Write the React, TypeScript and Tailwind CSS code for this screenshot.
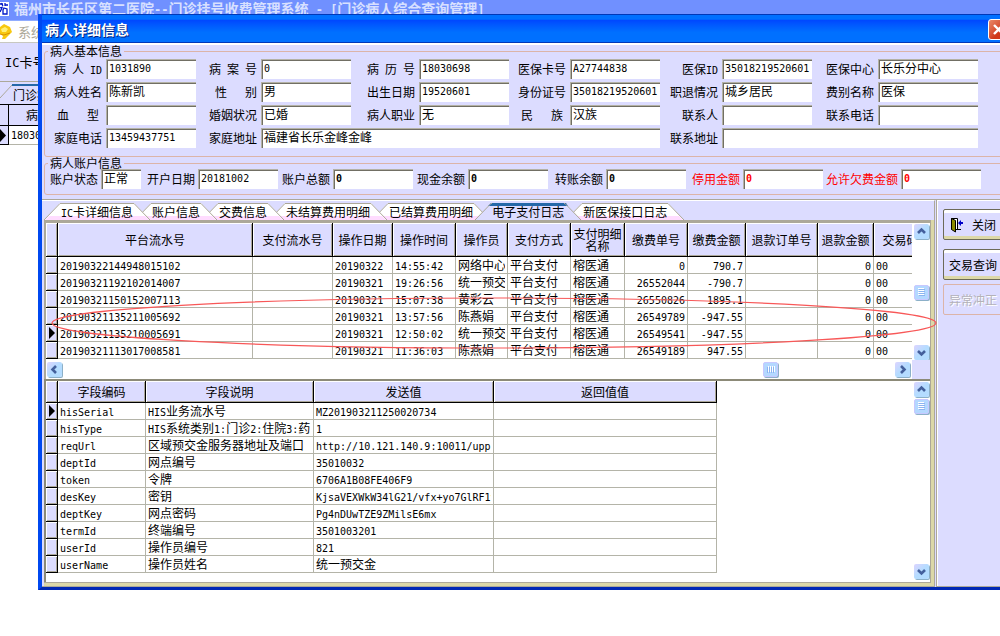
import React from 'react';

interface FieldProps {
  id: string;
  label: string;
  value?: string;
  wide?: string;
  align?: string;
}

interface AccountField {
  id: string;
  label: string;
  value: string;
  labelWidth: string;
  inputWidth: string;
  tone: string;
}

interface Column {
  title: string;
  width: number;
  align?: 'right';
}

const basicFields: FieldProps[] = [
  { id: 'patientId', label: '病 人 ID', value: '1031890' },
  { id: 'caseNo', label: '病 案 号', value: '0' },
  { id: 'recordNo', label: '病 历 号', value: '18030698' },
  { id: 'insuranceCard', label: '医保卡号', value: 'A27744838' },
  { id: 'insuranceId', label: '医保ID', value: '35018219520601' },
  { id: 'insuranceCenter', label: '医保中心', value: '长乐分中心' },
  { id: 'name', label: '病人姓名', value: '陈新凯' },
  { id: 'sex', label: '性   别', value: '男' },
  { id: 'birthday', label: '出生日期', value: '19520601' },
  { id: 'idCard', label: '身份证号', value: '35018219520601' },
  { id: 'retire', label: '职退情况', value: '城乡居民' },
  { id: 'feeType', label: '费别名称', value: '医保' },
  { id: 'blood', label: '血   型', align: 'pr-[7px]' },
  { id: 'marriage', label: '婚姻状况', value: '已婚' },
  { id: 'job', label: '病人职业', value: '无' },
  { id: 'nation', label: '民   族', value: '汉族', align: 'pr-[7px]' },
  { id: 'contact', label: '联系人' },
  { id: 'contactPhone', label: '联系电话' },
  { id: 'homePhone', label: '家庭电话', value: '13459437751' },
  { id: 'homeAddress', label: '家庭地址', value: '福建省长乐金峰金峰', wide: 'col-span-5' },
  { id: 'contactAddress', label: '联系地址', wide: 'col-span-3' },
];

const accountFields: AccountField[] = [
  { id: 'accState', label: '账户状态', value: '正常', labelWidth: 'w-[57px]', inputWidth: 'w-10', tone: 'text-black' },
  { id: 'accOpen', label: '开户日期', value: '20181002', labelWidth: 'w-[57px]', inputWidth: 'w-20', tone: 'text-black' },
  { id: 'accTotal', label: '账户总额', value: '0', labelWidth: 'w-[55px]', inputWidth: 'w-20', tone: 'text-black font-bold' },
  { id: 'accCash', label: '现金余额', value: '0', labelWidth: 'w-[55px]', inputWidth: 'w-20', tone: 'text-black font-bold' },
  { id: 'accTransfer', label: '转账余额', value: '0', labelWidth: 'w-[58px]', inputWidth: 'w-20', tone: 'text-black font-bold' },
  { id: 'accStop', label: '停用金额', value: '0', labelWidth: 'w-[57px]', inputWidth: 'w-20', tone: 'text-[#ff0000] font-bold' },
  { id: 'accDebt', label: '允许欠费金额', value: '0', labelWidth: 'w-[78px]', inputWidth: 'w-20', tone: 'text-[#ff0000] font-bold' },
];

const tabs = ['IC卡详细信息', '账户信息', '交费信息', '未结算费用明细', '已结算费用明细', '电子支付日志', '新医保接口日志'];

const payColumns: Column[] = [
  { title: '平台流水号', width: 195 },
  { title: '支付流水号', width: 80 },
  { title: '操作日期', width: 60 },
  { title: '操作时间', width: 63 },
  { title: '操作员', width: 52 },
  { title: '支付方式', width: 63 },
  { title: '支付明细名称', width: 54 },
  { title: '缴费单号', width: 63, align: 'right' },
  { title: '缴费金额', width: 58, align: 'right' },
  { title: '退款订单号', width: 72 },
  { title: '退款金额', width: 56, align: 'right' },
  { title: '交易码', width: 54 },
];

const payRows = [
  ['20190322144948015102', '', '20190322', '14:55:42', '网络中心', '平台支付', '榕医通', '0', '790.7', '', '0', '00'],
  ['20190321192102014007', '', '20190321', '19:26:56', '统一预交', '平台支付', '榕医通', '26552044', '-790.7', '', '0', '00'],
  ['20190321150152007113', '', '20190321', '15:07:38', '黄彩云', '平台支付', '榕医通', '26550826', '1895.1', '', '0', '00'],
  ['20190321135211005692', '', '20190321', '13:57:56', '陈燕娟', '平台支付', '榕医通', '26549789', '-947.55', '', '0', '00'],
  ['20190321135210005691', '', '20190321', '12:50:02', '统一预交', '平台支付', '榕医通', '26549541', '-947.55', '', '0', '00'],
  ['20190321113017008581', '', '20190321', '11:36:03', '陈燕娟', '平台支付', '榕医通', '26549189', '947.55', '', '0', '00'],
];

const logColumns: Column[] = [
  { title: '字段编码', width: 88 },
  { title: '字段说明', width: 168 },
  { title: '发送值', width: 180 },
  { title: '返回值值', width: 223 },
];

const logRows = [
  ['hisSerial', 'HIS业务流水号', 'MZ201903211250020734', ''],
  ['hisType', 'HIS系统类别1:门诊2:住院3:药,', '1', ''],
  ['reqUrl', '区域预交金服务器地址及端口', 'http://10.121.140.9:10011/upp:', ''],
  ['deptId', '网点编号', '35010032', ''],
  ['token', '令牌', '6706A1B08FE406F9', ''],
  ['desKey', '密钥', 'KjsaVEXWkW34lG21/vfx+yo7GlRF1y', ''],
  ['deptKey', '网点密码', 'Pg4nDUwTZE9ZMilsE6mx', ''],
  ['termId', '终端编号', '3501003201', ''],
  ['userId', '操作员编号', '821', ''],
  ['userName', '操作员姓名', '统一预交金', ''],
];

const isLatin = (text: string) => /^[\x20-\x7e]*$/.test(text);

// Latin runs are half as wide as a Chinese character, so they get their own font
const Mixed = ({ text, latin = 'text-[10px]' }: { text: string; latin?: string }) => (
  <>
    {text.split(/([\x20-\x7e]+)/).map((part, i) =>
      part && isLatin(part) ? (
        <span key={i} className={`whitespace-pre font-['DejaVu_Sans_Mono',monospace] ${latin}`}>{part}</span>
      ) : (
        part
      )
    )}
  </>
);

const TextBox = ({ id, value = '', className }: { id: string; value?: string; className: string }) => (
  <input
    id={id}
    type="text"
    defaultValue={value}
    className={`h-5 min-w-0 rounded-none border-l border-t border-[#b4b2a5] bg-white pl-[2px] outline-none shadow-[inset_1px_1px_0_#716f64] ${
      isLatin(value) ? "pb-[2px] font-['DejaVu_Sans_Mono',monospace] text-[10px]" : 'pb-1 text-xs'
    } ${className}`}
  />
);

const Field = ({ id, label, value, wide = '', align = 'pr-1' }: FieldProps) => (
  <>
    <label htmlFor={id} className={`text-right leading-5 whitespace-pre ${align}`}>
      <Mixed text={label} />
    </label>
    <TextBox id={id} value={value} className={`w-full ${wide}`} />
  </>
);

const Tab = ({ text, active, order }: { text: string; active: boolean; order: number }) => {
  const face = active ? '#dcdcff' : '#ffffff';
  const foot = active ? '#dcdcff' : '#ffdcff';
  return (
    <button type="button" className="relative -mr-[15px] flex h-[17px] shrink-0" style={{ zIndex: order }}>
      <svg width="17" height="17" className="shrink-0">
        <path d="M0 17 L16 0 H17 V17 Z" fill={face} />
        <path d="M1 17 L5 13 H17 V17 Z" fill={foot} />
        {active && <path d="M13 3 L16 0 H17 V3 Z" fill="#2468a8" />}
        <path d="M0 17 L16 0.5 H17" fill="none" stroke="#aca899" />
      </svg>
      <span
        className={`h-[17px] border-t leading-4 whitespace-nowrap ${
          active
            ? 'border-[#2468a8] bg-[#dcdcff] shadow-[inset_0_2px_0_#2468a8]'
            : 'border-[#aca899] bg-linear-to-b from-white from-75% to-[#ffdcff] to-75%'
        }`}
      >
        <Mixed text={text} />
      </span>
      <svg width="17" height="17" className="shrink-0">
        <path d="M0 0 H1 L17 17 H0 Z" fill={face} />
        <path d="M0 13 H12 L16 17 H0 Z" fill={foot} />
        {active && <path d="M0 0 H2 L4 3 H0 Z" fill="#2468a8" />}
        <path d="M0 0.5 H1 L17 17" fill="none" stroke="#aca899" />
      </svg>
    </button>
  );
};

interface GridProps {
  columns: Column[];
  rows: string[][];
  current: number;
  headClass: string;
  tableClass: string;
}

const Grid = ({ columns, rows, current, headClass, tableClass }: GridProps) => (
  <table className={`table-fixed border-separate border-spacing-0 bg-white ${tableClass}`}>
    <colgroup>
      <col className="w-3" />
      {columns.map(col => (
        <col key={col.title} style={{ width: col.width }} />
      ))}
    </colgroup>
    <thead>
      <tr className={headClass}>
        <th className="border-b border-r border-black bg-[#dcdcff] p-0 shadow-[inset_1px_1px_0_#ffffff,inset_-1px_-1px_0_#aca899]" />
        {columns.map(col => (
          <th
            key={col.title}
            className="border-b border-r border-black bg-[#dcdcff] px-[1px] py-0 text-center leading-3 font-normal shadow-[inset_1px_1px_0_#ffffff,inset_-1px_-1px_0_#aca899]"
          >
            {col.title}
          </th>
        ))}
      </tr>
    </thead>
    <tbody>
      {rows.map((row, r) => (
        <tr key={row[0]} className="h-[17px]">
          <td className="border-b border-r border-black bg-[#dcdcff] p-0 shadow-[inset_1px_1px_0_#ffffff,inset_-1px_-1px_0_#aca899]">
            {r === current && (
              <svg width="8" height="12" className="ml-[2px]">
                <path d="M1 0 L7 6 L1 12 Z" fill="#000000" />
              </svg>
            )}
          </td>
          {row.map((cell, c) => (
            <td key={c} className="border-b border-r border-[#b4b4a8] p-0">
              <div
                className={`h-4 overflow-hidden pl-[2px] leading-4 whitespace-nowrap ${
                  columns[c].align === 'right' ? 'pr-[2px] text-right' : 'mr-[2px]'
                }`}
              >
                <Mixed text={cell} />
              </div>
            </td>
          ))}
        </tr>
      ))}
    </tbody>
  </table>
);

const arrows = {
  up: 'M4 9 L7.5 5.5 L11 9',
  down: 'M4 6 L7.5 9.5 L11 6',
  left: 'M9 4 L5.5 7.5 L9 11',
  right: 'M6 4 L9.5 7.5 L6 11',
};

const ScrollButton = ({ dir }: { dir: keyof typeof arrows }) => (
  <button
    type="button"
    aria-label={dir}
    className="size-[15px] shrink-0 rounded-[2px] bg-linear-to-br from-[#dcd4ff] to-[#b4dcff] to-50% shadow-[1px_1px_0_#8cb0c8]"
  >
    <svg width="15" height="15">
      <path d={arrows[dir]} fill="none" stroke="#44609c" strokeWidth="2.6" />
    </svg>
  </button>
);

const Thumb = ({ vertical = false }: { vertical?: boolean }) => (
  <div className="size-[15px] shrink-0 rounded-[2px] border border-[#c8c8ff] bg-[#b4d8ff] shadow-[1px_1px_0_#8cb0c8]">
    <svg width="13" height="13" className={vertical ? '' : 'rotate-90'}>
      <path d="M3 2.5 H9 M3 4.5 H9 M3 6.5 H9 M3 8.5 H9" stroke="#ffffff" />
      <path d="M4 3.5 H10 M4 5.5 H10 M4 7.5 H10 M4 9.5 H10" stroke="#8cb4f0" />
    </svg>
  </div>
);

const sideButton =
  'flex h-[31px] w-20 items-center rounded-[2px] border border-[#6c6a58] pl-[5px] whitespace-nowrap shadow-[inset_0_3px_0_#ffffff,inset_0_-3px_0_#dcd8a8]';

const BackWindow = () => (
  <div>
    <div className="flex h-[21px] items-start gap-1 overflow-hidden border-b border-[#90acff] bg-[#7090ff]">
      <svg width="10" height="17" className="shrink-0">
        <rect width="9" height="14" y="2" fill="#ffffff" />
        <path d="M0 4 H3 M1 3 L3 6 M5 3 V6 M5 5 H8 M0 8 L3 7 M2 8 L0 12 M4 8 L7 9 V14 H3 V10 Z" fill="none" stroke="#0018c8" strokeWidth="1.3" />
      </svg>
      <h1 className="text-sm leading-4 font-bold whitespace-nowrap text-[#d8e0ff]">
        <Mixed text="福州市长乐区第二医院--门诊挂号收费管理系统 - [门诊病人综合查询管理]" latin="text-xs" />
      </h1>
    </div>
    <div className="flex h-[22px] items-center gap-[6px] border-b border-[#c8c8c0] bg-white">
      <svg width="12" height="17" className="shrink-0">
        <path d="M0 4 L4 1 L10 4 L12 9 L8 13 L5 16 H2 L3 13 L0 11 Z" fill="#f8c810" />
        <path d="M1 6 L5 4 L8 6 L6 9 L2 9 Z" fill="#fff078" />
        <path d="M0 11 L4 12 L10 10" fill="none" stroke="#d89000" />
      </svg>
      <span className="text-[13px] text-[#aca899]">系统</span>
    </div>
    <div className="bg-[#dcdcff]">
      <div className="h-[39px] border-b border-[#aca899] pl-[5px] text-[13px] leading-[38px]">
        <Mixed text="IC卡号" latin="text-xs" />
      </div>
      <div className="flex h-[22px] items-end">
        <svg width="12" height="20" className="shrink-0">
          <path d="M0 14 L12 1" fill="none" stroke="#aca899" />
        </svg>
        <span className="h-5 border-t-2 border-[#2468a8] pl-[1px] leading-[18px]">门诊病人</span>
      </div>
    </div>
    <table className="w-[120px] table-fixed border-separate border-spacing-0">
      <colgroup>
        <col className="w-[9px]" />
        <col />
      </colgroup>
      <tbody>
        <tr className="h-[22px]">
          <th className="border-y border-r border-black bg-[#dcdcff] p-0" />
          <th className="border-y border-black bg-[#dcdcff] p-0 pl-[17px] text-left font-normal">病历号</th>
        </tr>
        <tr className="h-[17px]">
          <td className="border-b border-r border-black bg-[#dcdcff] p-0">
            <svg width="7" height="13">
              <path d="M0 0 L6 6.5 L0 13 Z" fill="#000000" />
            </svg>
          </td>
          <td className="border-b border-[#b4b4a8] p-0 pl-[2px] leading-4">
            <Mixed text="18030698" />
          </td>
        </tr>
      </tbody>
    </table>
  </div>
);

const App: React.FC = () => (
  <div className="relative min-h-screen overflow-hidden bg-white font-['Noto_Sans_CJK_SC',sans-serif] text-xs text-black">
    <BackWindow />

    <section className="absolute left-[38px] right-0 top-[14px] overflow-hidden border-b-[3px] border-l-4 border-b-[#0028b4] border-l-[#0048f0] bg-[#dcdcff]">
      <header className="relative flex h-[29px] items-center overflow-hidden border-y border-[#0038b8] bg-linear-to-b from-[#0070ff] from-15% via-[#0048ff] via-20% to-[#0070ff] to-65% pl-[3px]">
        <h2 className="flex-1 pt-[1px] text-sm leading-4 font-bold whitespace-nowrap text-white [text-shadow:1px_1px_0_#002080]">病人详细信息</h2>
        <button type="button" aria-label="关闭窗口" className="-mr-[9px] mt-[2px] size-[21px] shrink-0 rounded-[3px] border border-white bg-linear-to-br from-[#e88868] to-[#d03818] to-60%">
          <svg width="19" height="19">
            <path d="M5 5 L14 14 M14 5 L5 14" stroke="#ffffff" strokeWidth="2.4" />
          </svg>
        </button>
      </header>

      <div className="border-t-2 border-white pl-[2px]">
        <fieldset className="-mr-1 rounded-[3px] border border-[#dcb4a8] pb-2 pt-[2px]">
          <legend className="ml-[3px] px-[2px] leading-3">病人基本信息</legend>
          <div className="-ml-px grid auto-rows-[20px] grid-cols-[62px_90px_65px_90px_68px_90px_61px_90px_62px_90px_66px_100px] gap-y-[3px]">
            {basicFields.map(field => (
              <Field key={field.id} {...field} />
            ))}
          </div>
        </fieldset>

        <fieldset className="-mr-1 rounded-[3px] border border-[#dcb4a8] pb-[5px]">
          <legend className="ml-[3px] px-[2px] leading-3">病人账户信息</legend>
          <div className="-ml-px flex">
            {accountFields.map(field => (
              <div key={field.id} className="flex shrink-0">
                <label
                  htmlFor={field.id}
                  className={`pr-[3px] text-right leading-5 whitespace-nowrap ${field.labelWidth} ${
                    field.tone.includes('ff0000') ? 'text-[#ff0000]' : ''
                  }`}
                >
                  {field.label}
                </label>
                <TextBox id={field.id} value={field.value} className={`${field.inputWidth} ${field.tone}`} />
              </div>
            ))}
          </div>
        </fieldset>
      </div>

      <div className="mt-1 flex border-t border-[#aca899]">
        <div className="min-w-0 flex-1 border-b border-r border-t border-b-[#aca899] border-r-[#aca899] border-t-white pl-[2px] pt-[2px]">
          <nav className="flex">
            {tabs.map((text, i) => (
              <Tab key={text} text={text} active={i === 5} order={i === 5 ? 10 : tabs.length - i} />
            ))}
          </nav>

          <div className="border-b-[3px] border-r-[3px] border-[#dcd8a8]">
            <div className="border-b border-r border-[#aca899] bg-white">
              <div className="border-l-2 border-t-[3px] border-[#aca899]">
                <div className="flex h-[137px]">
                  <div className="min-w-0 flex-1 overflow-hidden">
                    <Grid columns={payColumns} rows={payRows} current={4} headClass="h-[34px]" tableClass="w-[882px]" />
                  </div>
                  <div className="flex w-[18px] flex-col items-center pt-px">
                    <ScrollButton dir="up" />
                    <div className="flex flex-1 items-center">
                      <Thumb vertical />
                    </div>
                    <ScrollButton dir="down" />
                  </div>
                </div>
                <div className="flex h-[19px] items-center">
                  <div className="flex flex-1 items-center justify-between pl-px pr-[2px]">
                    <ScrollButton dir="left" />
                    <div className="flex flex-1 justify-end pr-[117px]">
                      <Thumb />
                    </div>
                    <ScrollButton dir="right" />
                  </div>
                  <div className="h-full w-[18px] bg-[#dcdcff]" />
                </div>
              </div>

              <div className="flex border-l-2 border-t-2 border-[#8c8a78]">
                <div className="min-w-0 flex-1 overflow-hidden pb-[9px]">
                  <Grid columns={logColumns} rows={logRows} current={0} headClass="h-[22px]" tableClass="w-[671px]" />
                </div>
                <div className="flex w-[18px] flex-col items-center pb-[3px] pt-px">
                  <ScrollButton dir="up" />
                  <div className="flex-1 pt-[2px]">
                    <Thumb vertical />
                  </div>
                  <ScrollButton dir="down" />
                </div>
              </div>
            </div>
          </div>
        </div>

        <aside className="ml-px flex w-16 flex-col border-b border-l border-[#aca899] pl-[6px] pt-[9px] shadow-[inset_1px_1px_0_#ffffff]">
          <button type="button" className={`mb-[9px] ${sideButton}`}>
            <svg width="16" height="16" className="mr-[7px] shrink-0">
              <path d="M2.5 12.5 V1.5 H8.5 V12.5" fill="#ffffff" stroke="#000000" />
              <path d="M2.5 1.5 L6.5 3.5 V15 L2.5 12.5 Z" fill="#8c8c00" stroke="#000000" />
              <path d="M7 12.5 H12" stroke="#000000" />
              <path d="M9 6 L12 3 V5 H14 V7 H12 V9 Z" fill="#0000c8" />
            </svg>
            关闭
          </button>
          <button type="button" className={`mb-1 ${sideButton}`}>交易查询</button>
          <button
            type="button"
            disabled
            className="flex h-[31px] w-20 items-center rounded-[2px] border border-[#dcb4a8] pl-[5px] whitespace-nowrap text-[#b4b2b8] [text-shadow:1px_1px_0_#ffffff]"
          >
            异常冲正
          </button>
        </aside>
      </div>

      {/* hand-drawn mark over the refunded rows */}
      <svg width="888" height="54" className="pointer-events-none absolute left-[8px] top-[282px] z-20">
        <ellipse cx="444" cy="27" rx="442" ry="25" fill="none" stroke="#f85858" strokeWidth="1.2" />
      </svg>
    </section>
  </div>
);

export default App;
